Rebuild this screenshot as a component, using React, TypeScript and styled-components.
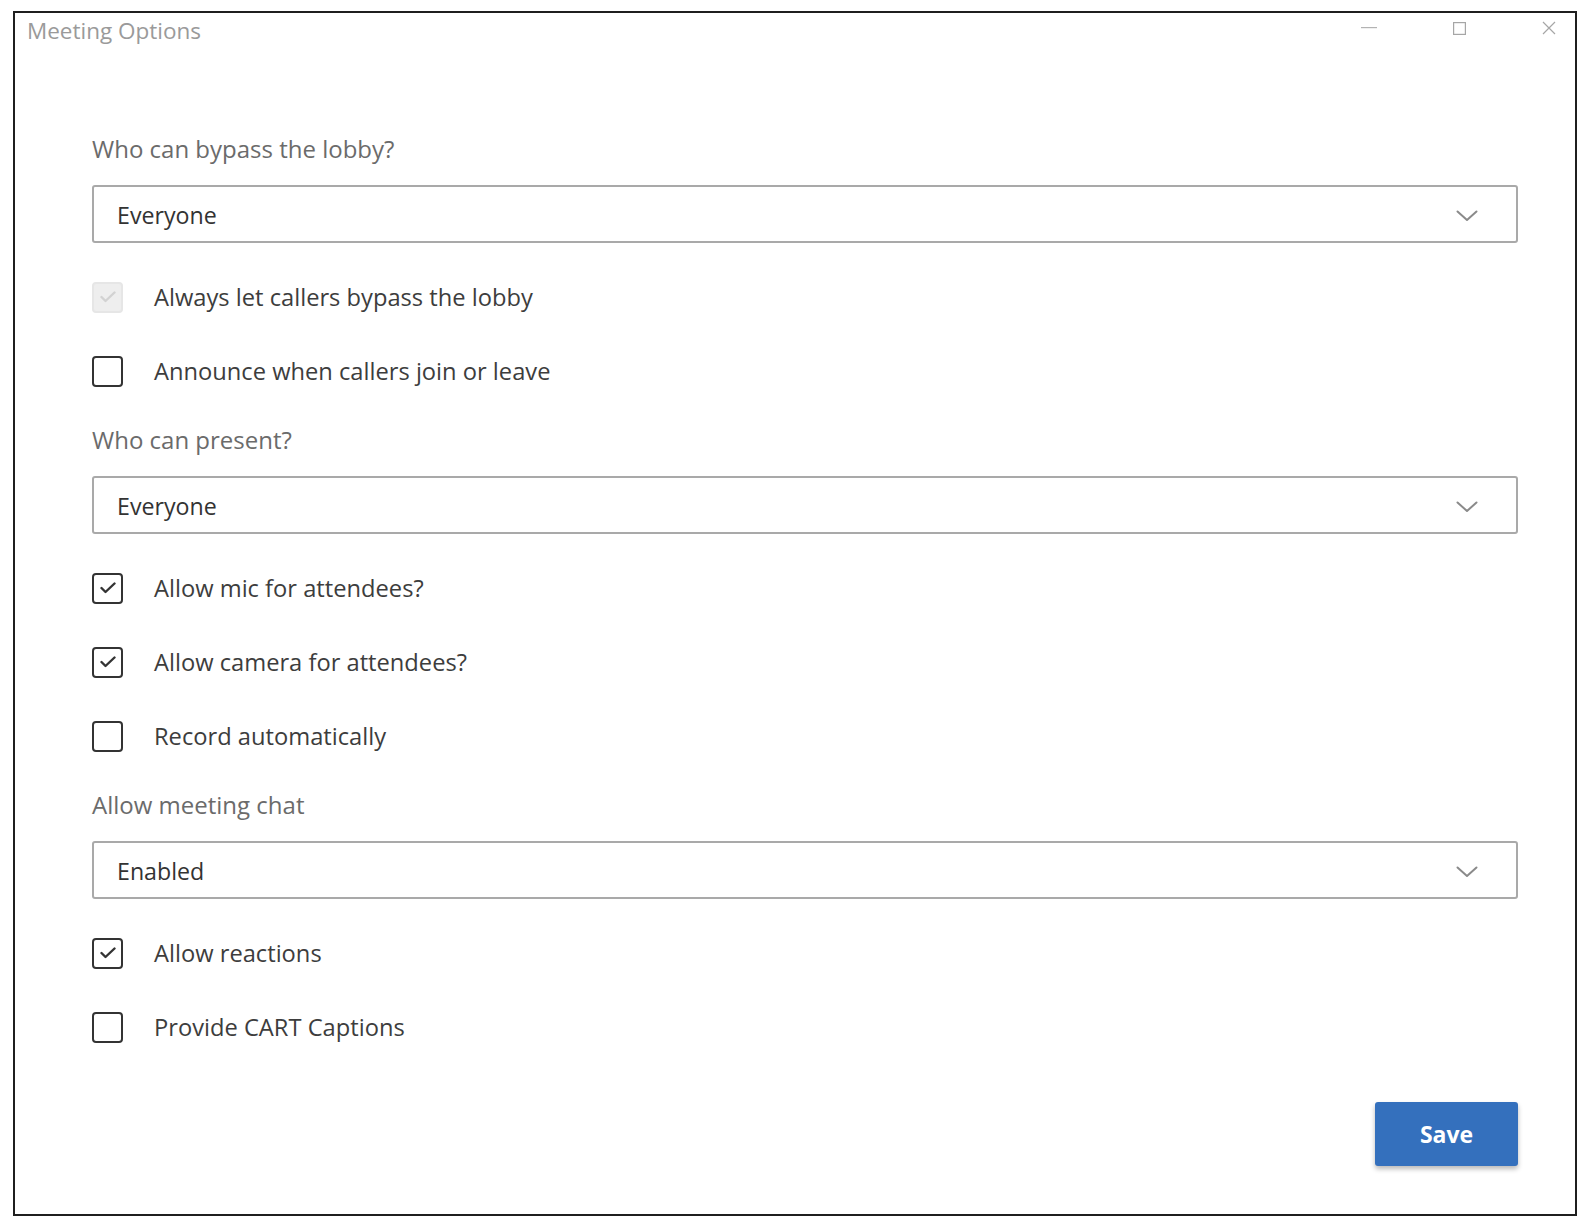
import styled, { createGlobalStyle } from "styled-components";

const GlobalStyle = createGlobalStyle`
  html, body {
    margin: 0;
    padding: 0;
    background: #ffffff;
  }
  body {
    font-family: "Open Sans", "Noto Sans", "Liberation Sans", sans-serif;
  }
`;

const Window = styled.div`
  box-sizing: border-box;
  width: 1564px;
  height: 1205px;
  margin: 11px 0 0 13px;
  border: 2px solid #1f1f1f;
  background: #ffffff;
  display: flex;
  flex-direction: column;
`;

const TitleBar = styled.div`
  height: 34px;
  display: flex;
  align-items: center;
  justify-content: space-between;
  padding-left: 12px;
`;

const Title = styled.span`
  font-size: 22.5px;
  color: #9a9a9a;
`;

const Controls = styled.div`
  display: flex;
  align-self: flex-start;
  gap: 38px;
  height: 30px;
`;

const ControlButton = styled.div`
  width: 52px;
  height: 30px;
  display: flex;
  align-items: center;
  justify-content: center;
`;

const Content = styled.div`
  flex: 1;
  display: flex;
  flex-direction: column;
  padding: 86px 57px 0 77px;
`;

const FieldLabel = styled.div<{ $top: number }>`
  margin-top: ${({ $top }) => $top}px;
  height: 32px;
  line-height: 32px;
  font-size: 24px;
  color: #6b6b6b;
`;

const Select = styled.div`
  box-sizing: border-box;
  margin-top: 20px;
  height: 58px;
  border: 2px solid #a9a9a9;
  border-radius: 3px;
  display: flex;
  align-items: center;
  justify-content: space-between;
  padding: 2px 38px 0 23px;
  font-size: 23.2px;
  color: #333333;
`;

const ChevronWrap = styled.span`
  display: flex;
  margin-top: 2px;
`;

const CheckRow = styled.label<{ $top: number }>`
  margin-top: ${({ $top }) => $top}px;
  height: 30px;
  display: flex;
  align-items: center;
  gap: 31px;
  font-size: 23.7px;
  color: #3d3d3d;
`;

const Box = styled.span<{ $disabled?: boolean }>`
  box-sizing: border-box;
  width: 31px;
  height: 31px;
  flex-shrink: 0;
  border-radius: 4px;
  border: 2px solid ${({ $disabled }) => ($disabled ? "#e6e6e6" : "#333333")};
  background: ${({ $disabled }) => ($disabled ? "#eeeeee" : "#ffffff")};
  display: flex;
  align-items: center;
  justify-content: center;
`;

const Footer = styled.div`
  margin-top: 60px;
  display: flex;
  justify-content: flex-end;
`;

const SaveButton = styled.button`
  width: 143px;
  height: 64px;
  border: none;
  border-radius: 3px;
  background: #3470bd;
  color: #ffffff;
  font-family: inherit;
  font-size: 23px;
  font-weight: 700;
  box-shadow: 0 3px 5px rgba(0, 0, 0, 0.28);
  cursor: pointer;
`;

const Chevron = () => (
  <ChevronWrap>
    <svg width="22" height="12" viewBox="0 0 22 12" fill="none">
      <path d="M1.5 1.5 L11 10 L20.5 1.5" stroke="#8a8a8a" strokeWidth="2" strokeLinecap="round" strokeLinejoin="round" />
    </svg>
  </ChevronWrap>
);

const Check = ({ color }: { color: string }) => (
  <svg width="16" height="12" viewBox="0 0 16 12" fill="none">
    <path d="M1.5 6 L5.5 10 L14.5 1.5" stroke={color} strokeWidth="2.4" strokeLinecap="round" strokeLinejoin="round" />
  </svg>
);

type Item =
  | { kind: "label"; text: string; top: number }
  | { kind: "select"; value: string }
  | { kind: "check"; text: string; checked: boolean; disabled?: boolean; top: number };

const items: Item[] = [
  { kind: "label", text: "Who can bypass the lobby?", top: 0 },
  { kind: "select", value: "Everyone" },
  { kind: "check", text: "Always let callers bypass the lobby", checked: true, disabled: true, top: 39 },
  { kind: "check", text: "Announce when callers join or leave", checked: false, top: 44 },
  { kind: "label", text: "Who can present?", top: 38 },
  { kind: "select", value: "Everyone" },
  { kind: "check", text: "Allow mic for attendees?", checked: true, top: 39 },
  { kind: "check", text: "Allow camera for attendees?", checked: true, top: 44 },
  { kind: "check", text: "Record automatically", checked: false, top: 44 },
  { kind: "label", text: "Allow meeting chat", top: 38 },
  { kind: "select", value: "Enabled" },
  { kind: "check", text: "Allow reactions", checked: true, top: 39 },
  { kind: "check", text: "Provide CART Captions", checked: false, top: 44 },
];

export default function App() {
  return (
    <>
      <GlobalStyle />
      <Window>
        <TitleBar>
          <Title>Meeting Options</Title>
          <Controls>
            <ControlButton>
              <svg width="16" height="2" viewBox="0 0 16 2">
                <rect width="16" height="1.2" fill="#b3b3b3" />
              </svg>
            </ControlButton>
            <ControlButton>
              <svg width="13" height="13" viewBox="0 0 13 13" fill="none">
                <rect x="0.6" y="0.6" width="11.8" height="11.8" stroke="#a6a6a6" strokeWidth="1.2" />
              </svg>
            </ControlButton>
            <ControlButton>
              <svg width="14" height="14" viewBox="0 0 14 14" fill="none">
                <path d="M1 1 L13 13 M13 1 L1 13" stroke="#a6a6a6" strokeWidth="1.2" />
              </svg>
            </ControlButton>
          </Controls>
        </TitleBar>
        <Content>
          {items.map((item, i) => {
            if (item.kind === "label") {
              return (
                <FieldLabel key={i} $top={item.top}>
                  {item.text}
                </FieldLabel>
              );
            }
            if (item.kind === "select") {
              return (
                <Select key={i}>
                  <span>{item.value}</span>
                  <Chevron />
                </Select>
              );
            }
            return (
              <CheckRow key={i} $top={item.top}>
                <Box $disabled={item.disabled}>
                  {item.checked && <Check color={item.disabled ? "#d2d2d2" : "#333333"} />}
                </Box>
                <span>{item.text}</span>
              </CheckRow>
            );
          })}
          <Footer>
            <SaveButton>Save</SaveButton>
          </Footer>
        </Content>
      </Window>
    </>
  );
}
